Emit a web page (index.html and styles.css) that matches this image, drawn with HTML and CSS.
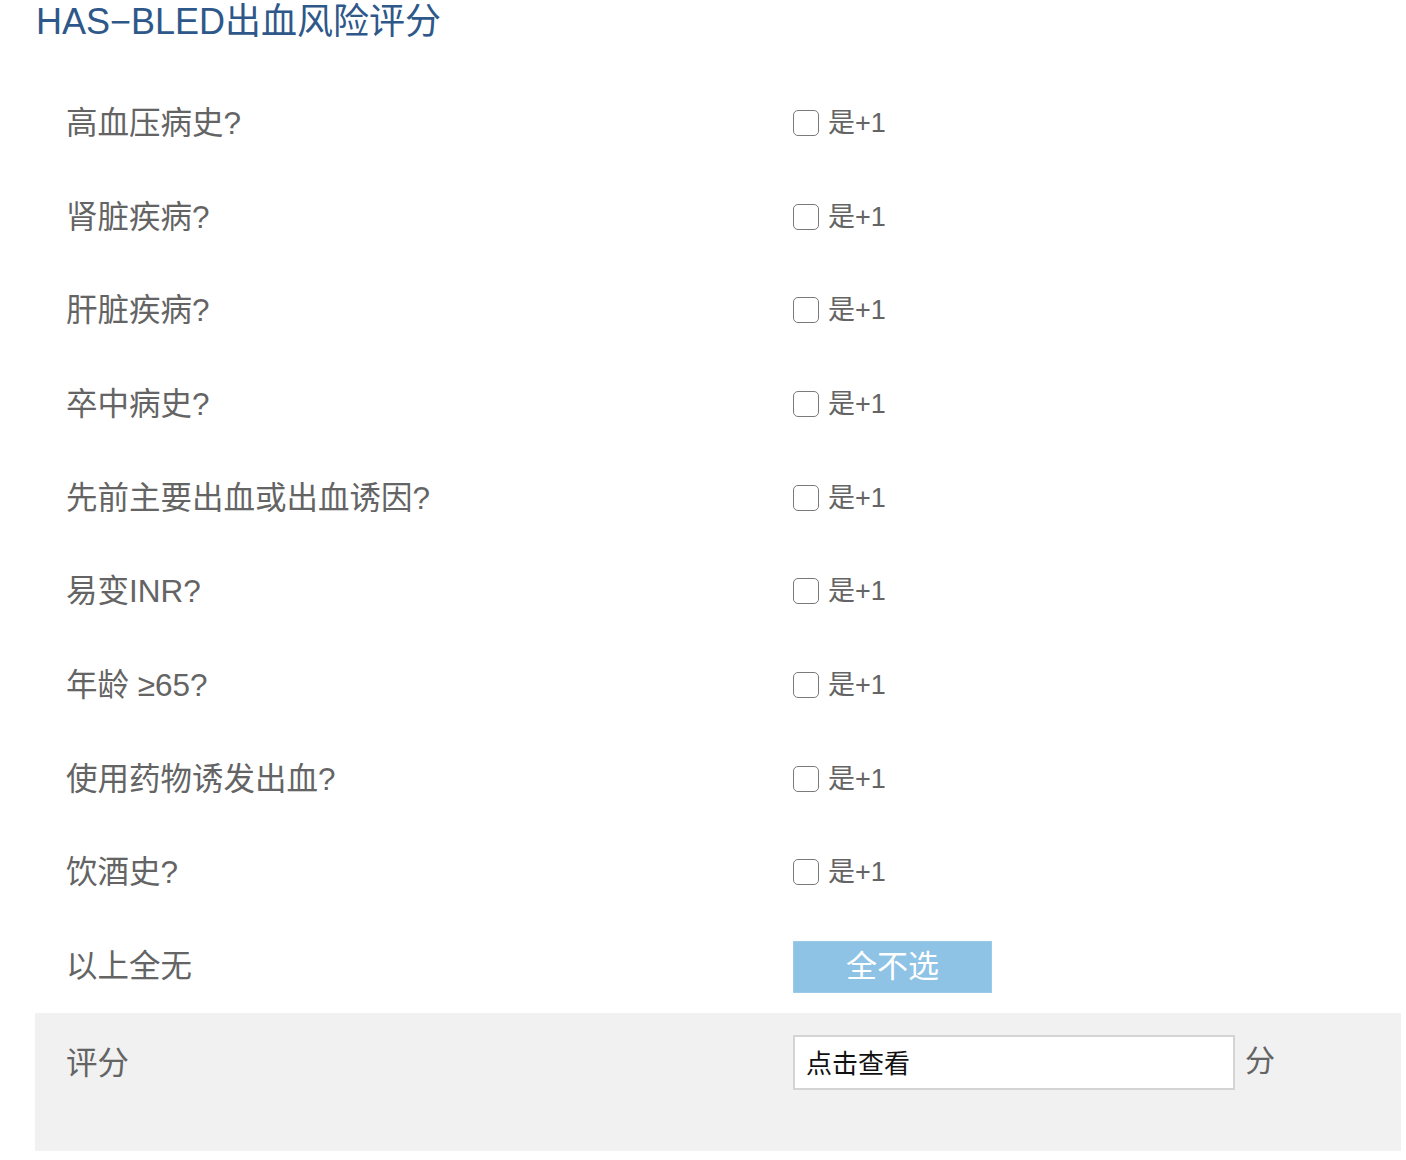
FILE: index.html
```html
<!DOCTYPE html>
<html lang="zh-CN">
<head>
<meta charset="utf-8">
<title>HAS-BLED出血风险评分</title>
<link rel="stylesheet" href="styles.css">
</head>
<body>
<div class="page">
  <h1 class="title">HAS−BLED出血风险评分</h1>
  <div class="form">
    <div class="row"><div class="label">高血压病史?</div><label class="opt"><input type="checkbox" class="box"><span>是+1</span></label></div>
    <div class="row"><div class="label">肾脏疾病?</div><label class="opt"><input type="checkbox" class="box"><span>是+1</span></label></div>
    <div class="row"><div class="label">肝脏疾病?</div><label class="opt"><input type="checkbox" class="box"><span>是+1</span></label></div>
    <div class="row"><div class="label">卒中病史?</div><label class="opt"><input type="checkbox" class="box"><span>是+1</span></label></div>
    <div class="row"><div class="label">先前主要出血或出血诱因?</div><label class="opt"><input type="checkbox" class="box"><span>是+1</span></label></div>
    <div class="row"><div class="label">易变INR?</div><label class="opt"><input type="checkbox" class="box"><span>是+1</span></label></div>
    <div class="row"><div class="label">年龄 ≥65?</div><label class="opt"><input type="checkbox" class="box"><span>是+1</span></label></div>
    <div class="row"><div class="label">使用药物诱发出血?</div><label class="opt"><input type="checkbox" class="box"><span>是+1</span></label></div>
    <div class="row"><div class="label">饮酒史?</div><label class="opt"><input type="checkbox" class="box"><span>是+1</span></label></div>
    <div class="row"><div class="label">以上全无</div><div class="opt"><button class="btn" type="button">全不选</button></div></div>
    <div class="row score"><div class="label">评分</div><div class="result"><input class="field" type="text" value="点击查看" readonly><span class="unit">分</span></div></div>
  </div>
</div>
</body>
</html>
```
FILE: styles.css
```css
* { box-sizing: border-box; }
html, body { margin: 0; padding: 0; background: #fff; }
body {
  font-family: "Liberation Sans", "Noto Sans CJK SC", sans-serif;
  color: #666;
}
.page {
  margin-left: 35px;
  width: 1366px;
}
.title {
  margin: 0;
  height: 76px;
  padding-left: 1px;
  font-size: 36px;
  line-height: 44px;
  font-weight: normal;
  color: #2e5889;
}
.row {
  display: grid;
  grid-template-columns: 758px 1fr;
  align-items: center;
  height: 93.7px;
}
.label {
  padding-left: 31px;
  font-size: 31.5px;
  line-height: 40px;
  color: #646464;
}
.opt {
  display: flex;
  align-items: center;
  gap: 9px;
  font-size: 27px;
  line-height: 34px;
  color: #646464;
}
.box {
  appearance: none;
  -webkit-appearance: none;
  margin: 0;
  width: 26px;
  height: 26px;
  border: 1.5px solid #7a7a7a;
  border-radius: 5px;
  background: #fff;
}
.btn {
  width: 199px;
  height: 52px;
  border: 1px solid #9ccbea;
  background: #8ec3e6;
  color: #fff;
  font-family: inherit;
  font-size: 31px;
  line-height: 50px;
  padding: 0;
  margin-top: 1px;
}
.score {
  height: 138px;
  align-items: start;
  background: #f1f1f1;
  padding-top: 22px;
}
.score .label { padding-top: 8px; }
.result {
  display: flex;
  align-items: flex-start;
  gap: 10px;
}
.field {
  width: 442px;
  height: 55px;
  border: 2px solid #d4d4d4;
  background: #fff;
  padding: 0 0 2px 11px;
  font-family: inherit;
  font-size: 26px;
  color: #111;
  outline: none;
}
.unit {
  font-size: 30px;
  line-height: 40px;
  padding-top: 6px;
  color: #646464;
}
```
